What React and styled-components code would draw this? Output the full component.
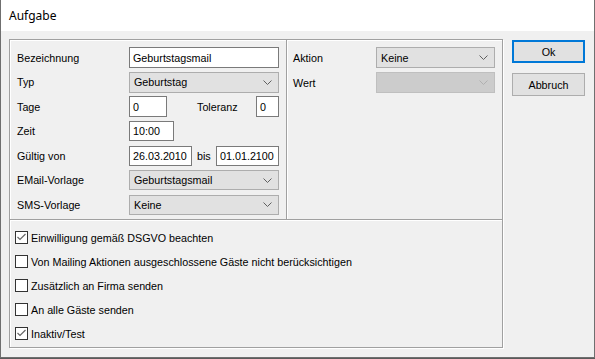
import React from 'react';
import styled, { createGlobalStyle } from 'styled-components';

const Global = createGlobalStyle`
body {
  margin: 0;
  background: #5a5a5a;
  font-family: "Liberation Sans", Arial, sans-serif;
  font-size: 10.75px;
  color: #000;
}
`;

const Window = styled.div`
width: 595px;
height: 358px;
box-sizing: border-box;
border: 1px solid #6f6f6f;
border-top: none;
background: #f0f0f0;
display: flex;
flex-direction: column;
`;

const TitleBar = styled.div`
height: 31px;
flex: none;
background: #fff;
display: flex;
align-items: center;
padding-left: 8px;
font-size: 12px;
font-family: "Noto Sans", "Liberation Sans", sans-serif;
`;

const Body = styled.div`
display: flex;
padding: 8px 0 0 8px;
`;

const GroupBox = styled.div`
width: 494px;
height: 309px;
box-sizing: border-box;
border: 1px solid #a0a0a0;
box-shadow: 1px 1px 0 #fff, inset 1px 1px 0 #fff;
display: flex;
flex-direction: column;
`;

const TopSection = styled.div`
height: 180px;
box-sizing: border-box;
display: flex;
border-bottom: 1px solid #a0a0a0;
box-shadow: 0 1px 0 #fff;
`;

const LeftCol = styled.div`
width: 277px;
box-sizing: border-box;
border-right: 1px solid #a0a0a0;
box-shadow: 1px 0 0 #fff;
padding: 7px 0 0 7px;
display: grid;
grid-auto-rows: 21px;
row-gap: 3.5px;
align-content: start;
`;

const RightCol = styled.div`
flex: 1;
padding: 7px 0 0 6px;
display: grid;
grid-auto-rows: 21px;
row-gap: 4px;
align-content: start;
`;

const Row = styled.div`
display: flex;
align-items: center;
`;

const Label = styled.span`
width: ${(p) => p.w || 112}px;
flex: none;
`;

const InlineLabel = styled.span`
margin-left: ${(p) => p.ml}px;
width: ${(p) => p.w}px;
flex: none;
`;

const Input = styled.div`
width: ${(p) => p.w}px;
height: ${(p) => p.h || 21}px;
box-sizing: border-box;
border: 1px solid #7a7a7a;
background: #fff;
padding-left: 3px;
display: flex;
align-items: center;
flex: none;
`;

const Select = styled.div`
width: ${(p) => p.w}px;
height: ${(p) => p.h || 21}px;
box-sizing: border-box;
border: 1px solid ${(p) => (p.disabled ? '#bfbfbf' : '#adadad')};
background: ${(p) => (p.disabled ? '#cccccc' : '#e1e1e1')};
padding: 0 6px 0 4px;
display: flex;
align-items: center;
justify-content: space-between;
flex: none;
`;

const Chevron = ({ disabled }) => (
  <svg width="9" height="5" viewBox="0 0 9 5">
    <polyline points="0.5,0.5 4.5,4.5 8.5,0.5" fill="none" stroke={disabled ? '#b0b0b0' : '#606060'} strokeWidth="1" />
  </svg>
);

const Dropdown = ({ w, h, value, disabled }) => (
  <Select w={w} h={h} disabled={disabled}>
    <span>{value}</span>
    <Chevron disabled={disabled} />
  </Select>
);

const Checks = styled.div`
padding: 11px 0 0 5px;
display: flex;
flex-direction: column;
gap: 11px;
`;

const CheckRow = styled.label`
display: flex;
align-items: center;
height: 13px;
gap: 3px;
`;

const Box = styled.span`
width: 13px;
height: 13px;
box-sizing: border-box;
border: 1px solid #333;
background: #fff;
display: flex;
align-items: center;
justify-content: center;
flex: none;
`;

const Check = ({ checked, children }) => (
  <CheckRow>
    <Box>
      {checked && (
        <svg width="11" height="11" viewBox="0 0 11 11">
          <polyline points="1.5,5 4,7.5 9.5,2" fill="none" stroke="#666" strokeWidth="1.2" />
        </svg>
      )}
    </Box>
    <span>{children}</span>
  </CheckRow>
);

const Buttons = styled.div`
margin-left: 9px;
padding-top: 1px;
display: flex;
flex-direction: column;
gap: 10px;
`;

const Button = styled.div`
width: 73px;
height: 23px;
box-sizing: border-box;
background: #e1e1e1;
border: ${(p) => (p.primary ? '2px solid #0078d7' : '1px solid #adadad')};
display: flex;
align-items: center;
justify-content: center;
`;

const App = () => {
  return (
    <>
      <Global />
      <Window>
        <TitleBar>Aufgabe</TitleBar>
        <Body>
          <GroupBox>
            <TopSection>
              <LeftCol>
                <Row>
                  <Label>Bezeichnung</Label>
                  <Input w={150} h={21}>Geburtstagsmail</Input>
                </Row>
                <Row>
                  <Label>Typ</Label>
                  <Dropdown w={150} value="Geburtstag" />
                </Row>
                <Row>
                  <Label>Tage</Label>
                  <Input w={38}>0</Input>
                  <InlineLabel ml={30} w={59}>Toleranz</InlineLabel>
                  <Input w={23}>0</Input>
                </Row>
                <Row>
                  <Label>Zeit</Label>
                  <Input w={45} h={20}>10:00</Input>
                </Row>
                <Row>
                  <Label>Gültig von</Label>
                  <Input w={63} h={20}>26.03.2010</Input>
                  <InlineLabel ml={5} w={19}>bis</InlineLabel>
                  <Input w={63} h={20}>01.01.2100</Input>
                </Row>
                <Row>
                  <Label>EMail-Vorlage</Label>
                  <Dropdown w={150} h={20} value="Geburtstagsmail" />
                </Row>
                <Row>
                  <Label>SMS-Vorlage</Label>
                  <Dropdown w={150} h={20} value="Keine" />
                </Row>
              </LeftCol>
              <RightCol>
                <Row>
                  <Label w={83}>Aktion</Label>
                  <Dropdown w={119} value="Keine" />
                </Row>
                <Row>
                  <Label w={83}>Wert</Label>
                  <Dropdown w={119} value="" disabled />
                </Row>
              </RightCol>
            </TopSection>
            <Checks>
              <Check checked>Einwilligung gemäß DSGVO beachten</Check>
              <Check>Von Mailing Aktionen ausgeschlossene Gäste nicht berücksichtigen</Check>
              <Check>Zusätzlich an Firma senden</Check>
              <Check>An alle Gäste senden</Check>
              <Check checked>Inaktiv/Test</Check>
            </Checks>
          </GroupBox>
          <Buttons>
            <Button primary>Ok</Button>
            <Button>Abbruch</Button>
          </Buttons>
        </Body>
      </Window>
    </>
  );
};

export default App;
